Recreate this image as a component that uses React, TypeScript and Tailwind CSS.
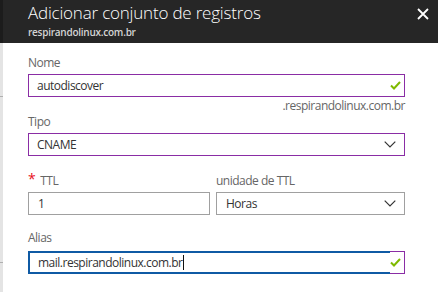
import React from "react";

const font = { fontFamily: '"Open Sans", "Noto Sans", sans-serif' };

function Check() {
  return (
    <svg width="11" height="9" viewBox="0 0 11 9" className="shrink-0">
      <path d="M1 4.5 L4 7.5 L10 1" fill="none" stroke="#7fba00" strokeWidth="2" />
    </svg>
  );
}

function Chevron() {
  return (
    <svg width="12" height="7" viewBox="0 0 12 7" className="shrink-0">
      <path d="M0.7 0.7 L6 6 L11.3 0.7" fill="none" stroke="#333" strokeWidth="1.2" />
    </svg>
  );
}

export default function App() {
  return (
    <div className="w-[438px] h-[292px] flex bg-white overflow-hidden text-[#333]" style={font}>
      <div className="w-[3px] flex flex-col">
        <div className="h-[43px] bg-[#1c1c1c]" />
        <div className="flex-1 bg-[#e4e4e4] flex flex-col">
          <div className="h-[53px]" />
          <div className="h-px bg-[#b0b0b0]" />
          <div className="h-[165px]" />
          <div className="h-px bg-[#b0b0b0]" />
        </div>
      </div>
      <div className="flex-1 flex flex-col">
        <div className="h-[43px] bg-[#262626] flex items-start justify-between pl-[25px] pr-[9px]">
          <div className="flex flex-col">
            <div className="text-[17px] font-light text-white leading-[22px] mt-[2px] tracking-[-0.2px]">Adicionar conjunto de registros</div>
            <div className="text-[10px] font-semibold text-[#d4d4d4] leading-[12px] mt-[2px] tracking-[-0.25px]">respirandolinux.com.br</div>
          </div>
          <svg width="12" height="12" viewBox="0 0 12 12" className="mt-[8px]">
            <path d="M1 1 L11 11 M11 1 L1 11" stroke="#fff" strokeWidth="1.8" />
          </svg>
        </div>
        <div className="flex flex-col pl-[25px] w-[402px] text-[12px] tracking-[-0.5px]">
          <div className="mt-[12px] leading-[16px] text-[#666]">Nome</div>
          <div className="mt-[3px] h-[23px] border border-[#8a2da5] flex items-center justify-between pl-[8px] pr-[3px]">
            <span>autodiscover</span>
            <Check />
          </div>
          <div className="text-right text-[#666] leading-[16px] mt-[1px]">.respirandolinux.com.br</div>
          <div className="leading-[16px] text-[#666]">Tipo</div>
          <div className="mt-[3px] h-[23px] border border-[#8a2da5] flex items-center justify-between pl-[8px] pr-[8px]">
            <span>CNAME</span>
            <Chevron />
          </div>
          <div className="flex gap-[6px] mt-[17px]">
            <div className="flex flex-col w-[182px]">
              <div className="leading-[16px] text-[#666] flex items-start">
                <span className="text-[#e81123] text-[14px] leading-[12px] mr-[5px]">*</span>
                <span>TTL</span>
              </div>
              <div className="mt-[3px] h-[23px] border border-[#a0a0a0] flex items-center pl-[9px]">1</div>
            </div>
            <div className="flex flex-col flex-1">
              <div className="leading-[16px] text-[#666]">unidade de TTL</div>
              <div className="mt-[3px] h-[23px] border border-[#a0a0a0] flex items-center justify-between pl-[9px] pr-[8px]">
                <span>Horas</span>
                <Chevron />
              </div>
            </div>
          </div>
          <div className="mt-[15px] leading-[16px] text-[#666]">Alias</div>
          <div className="mt-[5px] h-[23px] flex">
            <div className="flex-1 border-2 border-r-0 border-[#0f5aa4] flex items-center pl-[8px]">
              <span>mail.respirandolinux.com.br</span>
              <span className="w-px h-[15px] bg-[#111] ml-[1px]" />
            </div>
            <div className="w-[15px] border border-l-0 border-[#8a2da5] flex items-center justify-end pr-[3px]">
              <Check />
            </div>
          </div>
        </div>
      </div>
    </div>
  );
}
